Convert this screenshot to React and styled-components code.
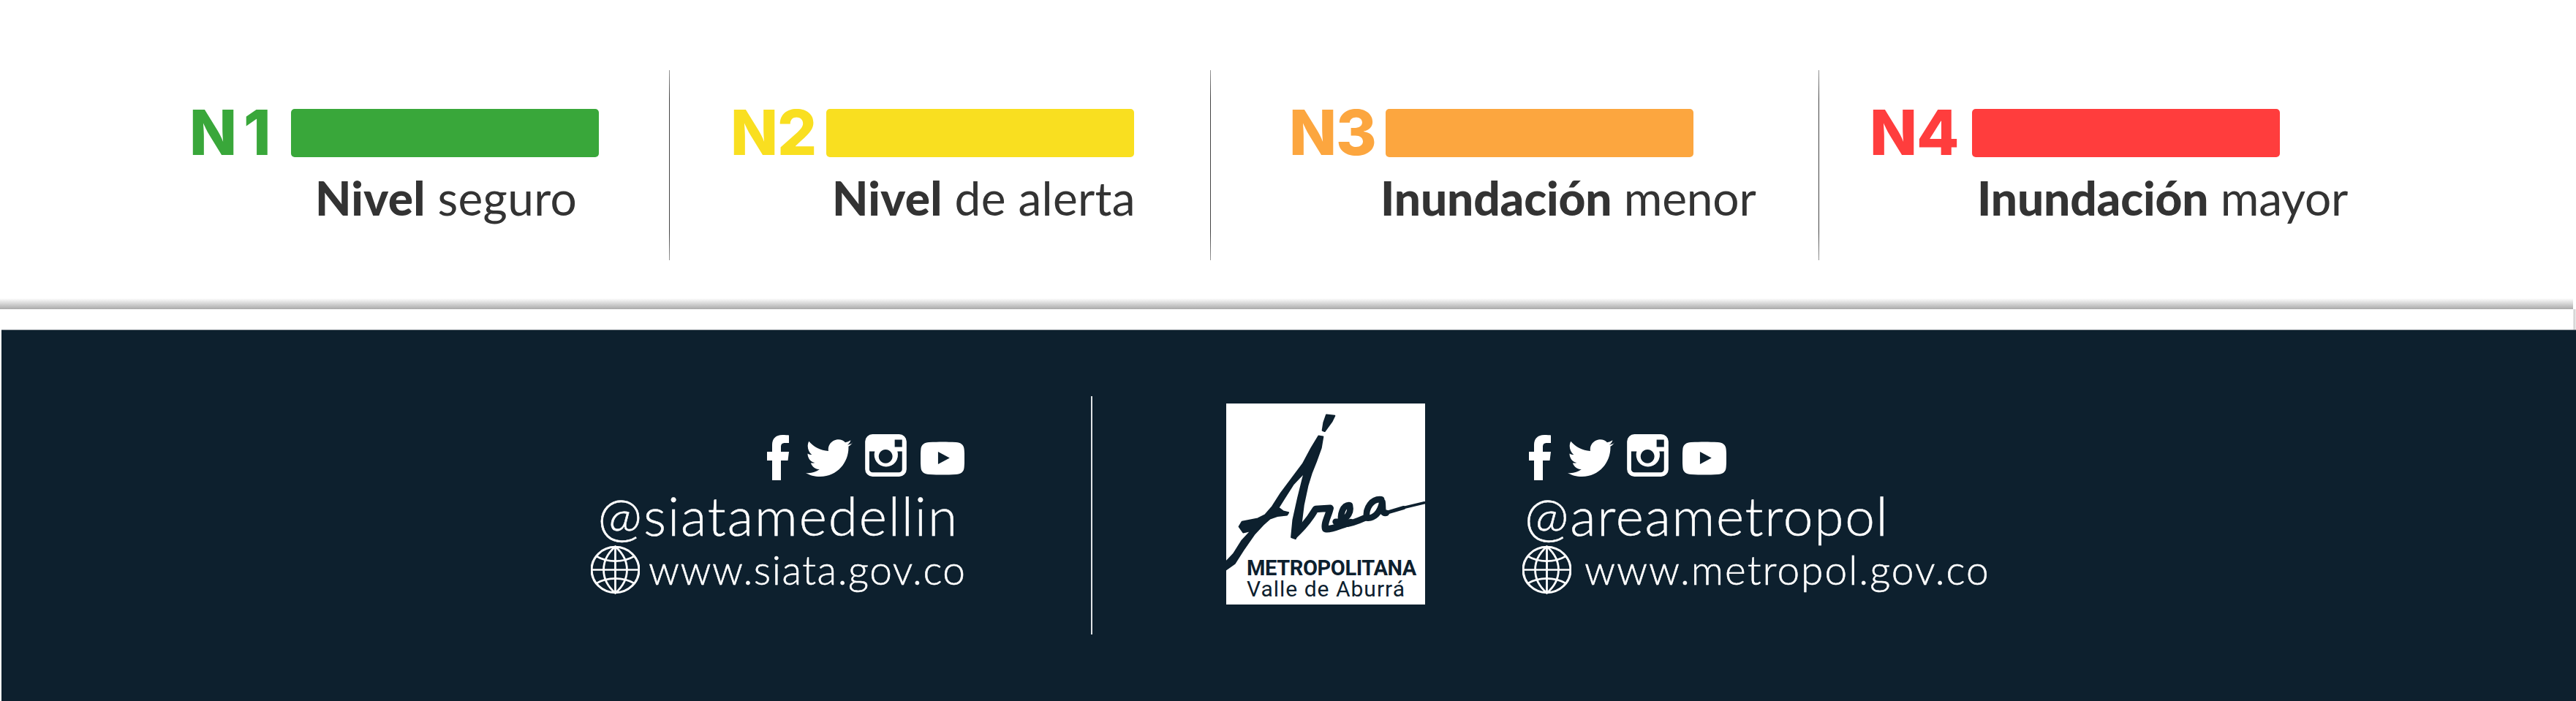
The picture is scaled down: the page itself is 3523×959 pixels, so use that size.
import React from "react";
import styled, { createGlobalStyle } from "styled-components";

const Global = createGlobalStyle`
  html, body { margin: 0; padding: 0; background: #fff; overflow: hidden; }
  body { font-family: "Lato", "Noto Sans", sans-serif; }
`;

const Page = styled.div`
  width: 3523px;
  height: 959px;
  display: flex;
  flex-direction: column;
  background: #fff;
`;

const Legend = styled.section`
  display: flex;
  align-items: flex-start;
  height: 408px;
  flex: none;
  box-sizing: border-box;
  padding: 96px 0 0 264px;
`;

const LegendItem = styled.div`
  width: ${(p) => p.$width}px;
  flex: none;
  padding-top: 53px;
`;

const LevelRow = styled.div`
  display: flex;
  align-items: center;
  height: 66px;
`;

const LevelCode = styled.span`
  width: ${(p) => p.$offset + 5}px;
  flex: none;
  font-family: "Inter", sans-serif;
  font-weight: 800;
  font-size: 85px;
  line-height: 66px;
  letter-spacing: ${(p) => p.$ls}px;
  text-indent: ${(p) => p.$indent || 0}px;
  color: ${(p) => p.$color};
  margin-left: -5px;
`;

const LevelBar = styled.div`
  width: 421px;
  height: 66px;
  border-radius: 5px;
  background: ${(p) => p.$color};
`;

const LevelLabel = styled.div`
  margin: 19px 0 0 ${(p) => p.$offset}px;
  font-size: 64px;
  line-height: 74px;
  font-weight: 400;
  color: #333;
  white-space: nowrap;
  letter-spacing: ${(p) => p.$ls}px;
  strong { font-weight: 900; }
`;

const LegendRule = styled.div`
  flex: none;
  width: 1px;
  height: 260px;
  margin-right: ${(p) => p.$gap + 1}px;
  background: linear-gradient(to bottom, #999, #444 15% 85%, #999);
`;

const ShadowBand = styled.div`
  height: 15px;
  flex: none;
  margin-right: 4px;
  background: linear-gradient(to bottom, rgba(170,170,170,0), rgba(170,170,170,1));
`;

const GapStrip = styled.div`
  height: 28px;
  flex: none;
  background: linear-gradient(to right, #fff 3519px, #ccc 3520px, #eee 3523px);
`;

const Footer = styled.footer`
  flex: 1;
  margin-left: 2px;
  display: flex;
  align-items: flex-start;
  background: #0d202e;
  border-top: 1px solid #56626c;
  padding-left: 806px;
`;

const SocialBlock = styled.div`
  width: ${(p) => p.$width}px;
  flex: none;
  margin: 143px 0 0 ${(p) => p.$ml || 0}px;
  display: flex;
  flex-direction: column;
  color: #fff;
`;

const IconRow = styled.div`
  display: flex;
  align-items: flex-start;
  justify-content: ${(p) => (p.$right ? "flex-end" : "flex-start")};
  height: 63px;
  padding-left: ${(p) => p.$pad || 0}px;
  svg { display: block; fill: #fff; flex: none; }
`;

const Handle = styled.div`
  font-weight: 300;
  font-size: 73px;
  line-height: 72px;
  -webkit-text-stroke: 0.5px #fff;
  letter-spacing: ${(p) => p.$ls}px;
  white-space: nowrap;
  text-align: ${(p) => (p.$right ? "right" : "left")};
  padding-right: ${(p) => p.$padRight || 0}px;
  padding-left: ${(p) => p.$padLeft || 0}px;
  margin-top: 11px;
`;

const WebRow = styled.div`
  display: flex;
  align-items: center;
  gap: ${(p) => p.$gap}px;
  height: 67px;
  margin-top: 5px;
`;

const WebText = styled.span`
  font-weight: 300;
  font-size: 55px;
  line-height: 67px;
  -webkit-text-stroke: 0.5px #fff;
  letter-spacing: ${(p) => p.$ls}px;
  white-space: nowrap;
`;

const FooterRule = styled.div`
  flex: none;
  width: 2px;
  height: 326px;
  margin: 90px 0 0 173px;
  background: #dfe3e6;
`;

const LogoBox = styled.div`
  flex: none;
  width: 272px;
  height: 275px;
  margin: 100px 0 0 183px;
  background: #fff;
  color: #0d202e;
  position: relative;
  overflow: hidden;
  display: flex;
  flex-direction: column;
  justify-content: flex-end;
  svg { position: absolute; inset: 0; width: 100%; height: 100%; }
`;

const LogoTitle = styled.div`
  margin-left: 28px;
  font-family: "Roboto", sans-serif;
  font-weight: 700;
  font-size: 29px;
  line-height: 28px;
  letter-spacing: -0.4px;
  white-space: nowrap;
`;

const LogoSub = styled.div`
  margin: 0 0 6px 28px;
  font-family: "Roboto", sans-serif;
  font-weight: 400;
  font-size: 30px;
  line-height: 30px;
  letter-spacing: 1px;
  white-space: nowrap;
`;

const Facebook = ({ style }) => (
  <svg width="30" height="62" viewBox="0 0 30 62" style={style}>
    <path d="M7 62V35H0V23h7v-9C7 5 12 0 21 0c4 0 7 .3 9 .5V11h-5c-5 0-6 2-6 6v6h11l-1.500 12H19v27z" />
  </svg>
);

const Twitter = ({ style }) => (
  <svg width="64" height="51" viewBox="0 0 64 51" preserveAspectRatio="none" style={{ marginTop: 6, ...style }}>
    <path d="M64 4.500c-1.500 2.300-3.300 3.800-5.600 5.300.9 20-14 41.200-38.800 41.200C12 51 5 49 0 46c7.300.9 13.500-1 18.800-5-5.500 0-10-3.600-12-8.600 2 .3 3.800.3 5.600-.3C6.400 31 2.500 25.500 2.500 19.500c1.800 1 3.700 1.500 5.800 1.600C3 17 1 9 4.300 2.800 11 10.600 20 15.500 31 16c-1.300-6.700 3.300-14 11-15.500 4.800-.9 9 .5 12 3.800 2.500-.5 5-1.400 7.500-3-.8 2.700-2.600 5-4.800 6.300 2.500-.4 5-1 7.300-2.600z" />
  </svg>
);

const Instagram = ({ style }) => (
  <svg width="57" height="58" viewBox="10 15 168 172" style={{ marginTop: -1, ...style }}>
    <path
      fillRule="evenodd"
      d="M40 15h108a30 30 0 0 1 30 30v112a30 30 0 0 1-30 30H40a30 30 0 0 1-30-30V45a30 30 0 0 1 30-30zM27 85v72a13 13 0 0 0 13 13h107a13 13 0 0 0 13-13V85h-19a48 48 0 1 1-92 0zM130 37v30h30V37zM93 77a28 28 0 1 0 .01 0z"
    />
  </svg>
);

const Youtube = ({ style }) => (
  <svg width="60" height="46" viewBox="237 45 178 133" style={{ marginTop: 9, ...style }}>
    <path
      fillRule="evenodd"
      d="M272 46c40-2 70-2 108 0 20 1 33 10 34 30 2 25 2 45 0 71-1 20-14 29-34 30-38 2-68 2-108 0-20-1-33-10-34-30-2-26-2-46 0-71 1-20 14-29 34-30zM308 85v50l47-25z"
    />
  </svg>
);

const Globe = () => (
  <svg width="67" height="67" viewBox="25 25 192 200" preserveAspectRatio="none" style={{ flex: "none" }}>
    <g fill="none" stroke="#fff" strokeWidth="8">
      <circle cx="121" cy="125" r="93" strokeWidth="9" />
      <path d="M121 30V220M30 125H212" />
      <path d="M121 30C60 85 60 165 121 220C182 165 182 85 121 30z" />
      <path d="M48 70C90 96 152 96 194 70M48 180C90 154 152 154 194 180" />
    </g>
  </svg>
);

const AreaScript = () => (
  <svg viewBox="110 62 818 826" aria-hidden="true">
    <g fill="#0d202e" stroke="#0d202e" strokeWidth="6" strokeLinejoin="round">
      <path d="M522 108L556 112L545 135L515 176L506 172L511 140z" />
      <path d="M490 195L508 198L500 245L480 300L462 345L445 400L428 480L418 560L395 618L378 612L385 540L405 450L425 370L432 345L385 395L350 450L325 490L345 505L366 510L360 520L320 525L290 535L262 560L225 600L180 665L145 720L110 745L110 712L140 680L175 625L212 585L180 592L163 568L175 548L240 535L270 520L300 485L335 430L380 370L425 310L460 245z" />
    </g>
    <g transform="translate(360 390)" fill="none" stroke="#0d202e" strokeLinecap="round" strokeLinejoin="round">
      <path strokeWidth="28" d="M32 212C62 185 92 150 118 106L178 102C172 132 150 165 158 188C185 192 220 172 262 160" />
      <path strokeWidth="26" d="M200 158C232 158 268 130 258 90C232 85 214 130 226 166C250 172 285 158 320 142" />
      <path strokeWidth="26" d="M388 66C350 62 322 100 328 142C356 146 384 122 392 76C396 100 388 125 408 122" />
      <path strokeWidth="15" d="M405 122L480 100" />
      <path strokeWidth="11" d="M480 100L565 80" />
    </g>
  </svg>
);

const levels = [
  { code: "N1", color: "#39a73a", width: 651, offset: 134, labelOffset: 167, strong: "Nivel", rest: "seguro", gap: 83, ls: 9, lls: 0.3 },
  { code: "N2", color: "#f9df20", width: 655, offset: 130, indent: 4, labelOffset: 138, strong: "Nivel", rest: "de alerta", gap: 111, ls: -1, lls: 0.3 },
  { code: "N3", color: "#fca63f", width: 719, offset: 127, labelOffset: 120, strong: "Inundación", rest: "menor", gap: 73, ls: -1, lls: -0.15 },
  { code: "N4", color: "#ff3d3d", width: 900, offset: 135, labelOffset: 142, strong: "Inundación", rest: "mayor", ls: -1, lls: -0.15 },
];

export default function App() {
  return (
    <Page>
      <Global />
      <Legend>
        {levels.map((l) => (
          <React.Fragment key={l.code}>
            <LegendItem $width={l.width}>
              <LevelRow>
                <LevelCode $color={l.color} $offset={l.offset} $ls={l.ls} $indent={l.indent}>{l.code}</LevelCode>
                <LevelBar $color={l.color} />
              </LevelRow>
              <LevelLabel $offset={l.labelOffset} $ls={l.lls}>
                <strong>{l.strong}</strong> {l.rest}
              </LevelLabel>
            </LegendItem>
            {l.gap && <LegendRule $gap={l.gap} />}
          </React.Fragment>
        ))}
      </Legend>
      <ShadowBand />
      <GapStrip />
      <Footer>
        <SocialBlock $width={511}>
          <IconRow $right>
            <Facebook />
            <Twitter style={{ marginLeft: 23 }} />
            <Instagram style={{ marginLeft: 17 }} />
            <Youtube style={{ marginLeft: 19 }} />
          </IconRow>
          <Handle $right $padRight={8} $ls={1.9}>@siatamedellin</Handle>
          <WebRow $gap={12}>
            <Globe />
            <WebText $ls={1.5}>www.siata.gov.co</WebText>
          </WebRow>
        </SocialBlock>
        <FooterRule />
        <LogoBox>
          <AreaScript />
          <LogoTitle>METROPOLITANA</LogoTitle>
          <LogoSub>Valle de Aburrá</LogoSub>
        </LogoBox>
        <SocialBlock $width={640} $ml={133}>
          <IconRow $pad={9}>
            <Facebook />
            <Twitter style={{ marginLeft: 23 }} />
            <Instagram style={{ marginLeft: 17 }} />
            <Youtube style={{ marginLeft: 19 }} />
          </IconRow>
          <Handle $padLeft={3} $ls={1.7}>@areametropol</Handle>
          <WebRow $gap={18}>
            <Globe />
            <WebText $ls={2}>www.metropol.gov.co</WebText>
          </WebRow>
        </SocialBlock>
      </Footer>
    </Page>
  );
}
